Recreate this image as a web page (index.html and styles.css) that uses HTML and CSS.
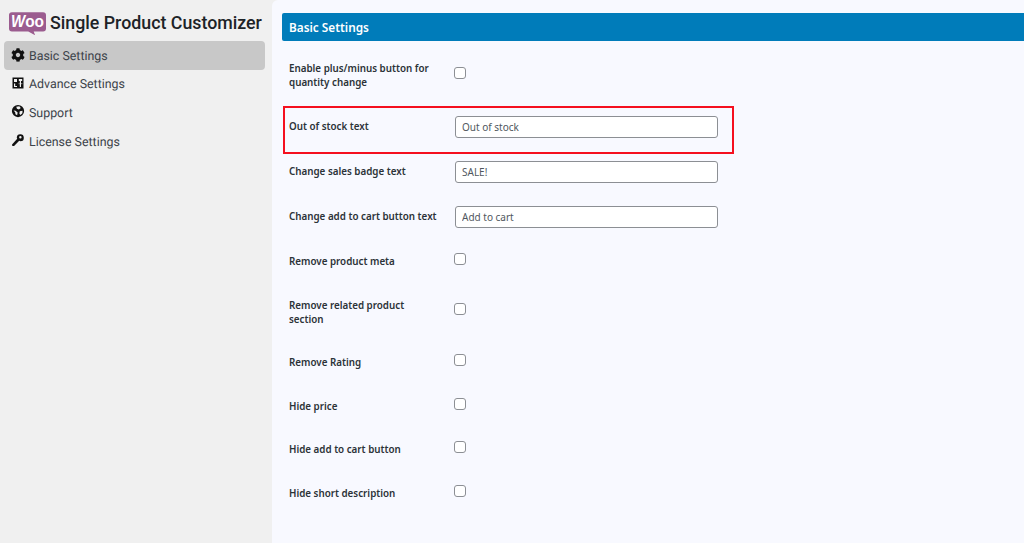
FILE: index.html
```html
<!DOCTYPE html>
<html lang="en">
<head>
<meta charset="utf-8">
<title>Single Product Customizer</title>
<link rel="stylesheet" href="styles.css">
</head>
<body>
<div class="app">
  <aside class="sidebar">
    <div class="brand">
      <svg class="woo" viewBox="0 0 38 24" aria-hidden="true">
        <path class="woo-bg" d="M3 0H34.500A3 3 0 0 1 37.500 3V16.500A3 3 0 0 1 34.500 19.500H25L26.500 23.500L19.500 19.500H3A3 3 0 0 1 0 16.500V3A3 3 0 0 1 3 0Z"/>
        <text class="woo-text" x="2" y="15" textLength="33.500" lengthAdjust="spacingAndGlyphs"><tspan class="woo-w">W</tspan>oo</text>
      </svg>
      <span class="brand-name">Single Product Customizer</span>
    </div>
    <nav class="nav">
      <a class="nav-item active">
        <svg class="ico" viewBox="0 0 512 512"><path d="M487.4 315.7l-42.6-24.6c4.3-23.2 4.3-47 0-70.2l42.6-24.6c4.9-2.8 7.1-8.6 5.500-14-11.100-35.600-30-67.800-54.700-94.600-3.800-4.100-10-5.100-14.800-2.300L380.800 110c-17.900-15.400-38.500-27.300-60.800-35.100V25.800c0-5.600-3.900-10.500-9.400-11.700-36.700-8.200-74.300-7.800-109.200 0-5.500 1.200-9.400 6.100-9.400 11.700V75c-22.200 7.900-42.800 19.800-60.800 35.100L88.700 85.500c-4.900-2.800-11-1.900-14.800 2.300-24.700 26.700-43.600 58.900-54.700 94.600-1.700 5.400.6 11.200 5.500 14L67.300 221c-4.300 23.200-4.300 47 0 70.200l-42.600 24.600c-4.900 2.800-7.100 8.600-5.500 14 11.100 35.600 30 67.800 54.700 94.600 3.800 4.100 10 5.100 14.800 2.300l42.600-24.600c17.900 15.400 38.500 27.300 60.800 35.100v49.200c0 5.600 3.900 10.500 9.400 11.700 36.700 8.200 74.300 7.800 109.200 0 5.500-1.200 9.400-6.100 9.400-11.700v-49.200c22.200-7.900 42.800-19.800 60.800-35.100l42.600 24.600c4.900 2.800 11 1.900 14.800-2.300 24.700-26.700 43.600-58.900 54.700-94.600 1.500-5.500-.7-11.300-5.600-14.100zM256 336c-44.100 0-80-35.900-80-80s35.900-80 80-80 80 35.900 80 80-35.900 80-80 80z"/></svg>
        <span class="nav-label">Basic Settings</span>
      </a>
      <a class="nav-item">
        <svg class="ico ico-up" viewBox="0 0 14 14"><path fill-rule="evenodd" d="M1.500 1.500H12.500V12.500H1.500ZM3 3V6H6V3ZM3 7.500V11H6V10H4.200V7.500ZM7.800 3V5H8.800V11H10V5H11.200V3ZM7.800 7V8.200H8.300V7ZM10.500 7V8.200H11.200V7Z"/></svg>
        <span class="nav-label">Advance Settings</span>
      </a>
      <a class="nav-item">
        <svg class="ico ico-up" viewBox="0 0 16 16"><path fill-rule="evenodd" d="M8 1a7 7 0 1 0 0 14A7 7 0 0 0 8 1ZM6 3.200 9.500 2.700 11.200 4.600 9 6.300 6.800 5.400ZM2.900 7.300 5.200 7.800 7.600 9.800 7 12.800 5.100 11.600 4.800 9.500ZM10 8.200 13.200 7.600 13 10.600 10.800 12.500 9.600 11Z"/></svg>
        <span class="nav-label">Support</span>
      </a>
      <a class="nav-item">
        <svg class="ico ico-up" viewBox="0 0 16 16"><path fill-rule="evenodd" d="M10.500 1.500A4 4 0 0 1 10.800 9.500L9.400 8.900 3.500 14.800 1.500 14.800 1.200 13 7.100 6.700 6.600 5.300A4 4 0 0 1 10.500 1.500ZM10.700 3.400A1.400 1.400 0 1 0 10.700 6.200 1.400 1.400 0 0 0 10.700 3.400Z"/></svg>
        <span class="nav-label">License Settings</span>
      </a>
    </nav>
  </aside>
  <main class="panel">
    <h1 class="panel-title">Basic Settings</h1>
    <form class="form">
      <div class="row row-check row-first">
        <label class="label">Enable plus/minus button for quantity change</label>
        <input class="check" type="checkbox">
      </div>
      <div class="row row-text">
        <label class="label">Out of stock text</label>
        <input class="text" type="text" value="Out of stock">
        <div class="highlight"></div>
      </div>
      <div class="row row-text">
        <label class="label">Change sales badge text</label>
        <input class="text" type="text" value="SALE!">
      </div>
      <div class="row row-text">
        <label class="label">Change add to cart button text</label>
        <input class="text" type="text" value="Add to cart">
      </div>
      <div class="row row-check">
        <label class="label">Remove product meta</label>
        <input class="check" type="checkbox">
      </div>
      <div class="row row-check">
        <label class="label">Remove related product section</label>
        <input class="check" type="checkbox">
      </div>
      <div class="row row-check">
        <label class="label">Remove Rating</label>
        <input class="check" type="checkbox">
      </div>
      <div class="row row-check">
        <label class="label">Hide price</label>
        <input class="check" type="checkbox">
      </div>
      <div class="row row-check">
        <label class="label">Hide add to cart button</label>
        <input class="check" type="checkbox">
      </div>
      <div class="row row-check">
        <label class="label">Hide short description</label>
        <input class="check" type="checkbox">
      </div>
    </form>
  </main>
</div>
</body>
</html>
```
FILE: styles.css
```css
* { box-sizing: border-box; }
html, body { margin: 0; height: 100%; overflow: hidden; }
body { background: #f0f0f0; color: #2c3338; font-family: "Noto Sans", sans-serif; }
.app { display: flex; height: 543px; }

.sidebar { flex: 0 0 272px; padding: 12px 7px 0 4px; }
.brand { display: flex; align-items: flex-start; gap: 3.500px; padding-left: 5px; height: 29px; }
.woo { width: 37.500px; height: 24px; flex: none; overflow: visible; }
.woo-bg { fill: #9b5c8f; }
.woo-text { fill: #fff; font: 700 17.500px "Liberation Sans", sans-serif; }
.woo-w { font-size: 17px; font-style: italic; }
.brand-name { font: 500 17.800px/21px Roboto, sans-serif; color: #1d2327; white-space: nowrap; }

.nav { display: flex; flex-direction: column; }
.nav-item { display: flex; align-items: center; gap: 4px; height: 28.600px; padding-left: 7px; font: 400 12.400px/16px Roboto, sans-serif; color: #3c434a; border-radius: 4px; text-rendering: geometricPrecision; }
.nav-item.active { background: #c8c8c8; }
.nav-label { margin-top: 3px; }
.ico { width: 14px; height: 14px; flex: none; fill: #111; }
.ico-up { margin-top: -2px; }

.panel { flex: 1; background: #f8f9ff; border-radius: 6px 0 0 0; padding: 13px 0 0 10px; }
.panel-title { margin: 0 0 5px; height: 28px; padding-left: 7px; background: #007cba; color: #fff; font: 600 11.800px/28px "Noto Sans", sans-serif; border-radius: 2px 0 0 2px; }

.form { padding-left: 7px; }
.row { position: relative; display: grid; grid-template-columns: 165px 264px; }
.row-check { align-items: center; padding: 16.100px 0 13.500px; }
.row-first { padding: 16px 0 14px; }
.row-text { align-items: start; height: 45px; padding-top: 16px; }
.label { font: 600 9.800px/14px "Noto Sans", sans-serif; color: #2c3338; width: 150px; }
.row-first .label { width: 158px; }
.row-text .label { width: 160px; }
.check { appearance: none; width: 12px; height: 12px; margin: -6.500px 0 0; background: #fff; border: 1px solid #8c8f94; border-radius: 3px; }
.text { width: 263px; height: 22.500px; margin: -4.500px 0 0 1px; padding: 0 6px; background: #fff; border: 1px solid #8c8f94; border-radius: 3px; color: #50575e; font: 400 10px "Noto Sans", sans-serif; }
.highlight { position: absolute; left: -6px; top: 1.500px; width: 451px; height: 48px; border: 2px solid #f5101f; pointer-events: none; }
```
